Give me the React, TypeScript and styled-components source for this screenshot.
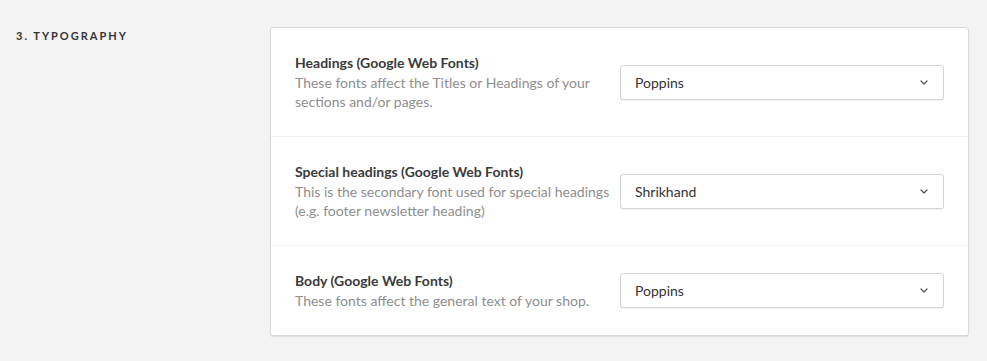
import React from "react";
import styled, { createGlobalStyle } from "styled-components";

const Global = createGlobalStyle`
  html, body { margin: 0; padding: 0; background: #f3f3f3; }
  body { font-family: Lato, "Noto Sans", sans-serif; -webkit-font-smoothing: antialiased; }
`;

const Page = styled.div`
  display: grid;
  grid-template-columns: 254px 699px;
  padding: 27px 0 0 16px;
  box-sizing: border-box;
  height: 361px;
`;

const SectionTitle = styled.h2`
  margin: 1px 0 0;
  font-size: 11px;
  font-weight: 700;
  letter-spacing: 2px;
  color: #333;
  text-transform: uppercase;
  line-height: 16px;
`;

const Card = styled.div`
  background: #fff;
  border: 1px solid #d8d8d8;
  border-radius: 3px;
  box-shadow: 0 1px 1px rgba(0, 0, 0, 0.08);
  align-self: start;
`;

const Row = styled.div`
  display: grid;
  grid-template-columns: 1fr 324px;
  align-items: center;
  padding: 25px 24px;
  border-top: 1px solid #efefef;
  &:first-child { border-top: none; }
`;

const TextCol = styled.div`
  padding-right: 6px;
`;

const Label = styled.div`
  font-size: 14px;
  font-weight: 700;
  color: #3a3a3a;
  line-height: 20px;
`;

const Hint = styled.div`
  font-size: 14px;
  color: #8e8e8e;
  line-height: 19px;
`;

const Select = styled.div`
  display: flex;
  align-items: center;
  justify-content: space-between;
  height: 35px;
  box-sizing: border-box;
  padding: 0 15px 0 14px;
  border: 1px solid #cfd4d4;
  border-radius: 3px;
  box-shadow: 0 1px 1px rgba(0, 0, 0, 0.06);
  font-size: 14px;
  color: #333;
  background: #fff;
`;

const Chevron = () => (
  <svg width="8" height="5" viewBox="0 0 8 5" fill="none">
    <path d="M1 1l3 3 3-3" stroke="#555" strokeWidth="1.3" strokeLinecap="round" strokeLinejoin="round" />
  </svg>
);

const rows = [
  {
    label: "Headings (Google Web Fonts)",
    hint: "These fonts affect the Titles or Headings of your sections and/or pages.",
    value: "Poppins",
  },
  {
    label: "Special headings (Google Web Fonts)",
    hint: "This is the secondary font used for special headings (e.g. footer newsletter heading)",
    value: "Shrikhand",
  },
  {
    label: "Body (Google Web Fonts)",
    hint: "These fonts affect the general text of your shop.",
    value: "Poppins",
  },
];

export default function App() {
  return (
    <>
      <Global />
      <Page>
        <SectionTitle>3. Typography</SectionTitle>
        <Card>
          {rows.map((r) => (
            <Row key={r.label}>
              <TextCol>
                <Label>{r.label}</Label>
                <Hint>{r.hint}</Hint>
              </TextCol>
              <Select>
                <span>{r.value}</span>
                <Chevron />
              </Select>
            </Row>
          ))}
        </Card>
      </Page>
    </>
  );
}
